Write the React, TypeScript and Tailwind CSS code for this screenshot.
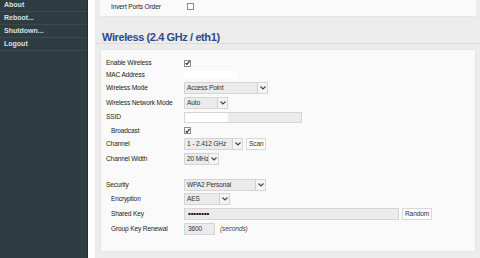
import React from 'react';

const MENU = ['About', 'Reboot...', 'Shutdown...', 'Logout'];

const Chevron = () => (
  <svg width="6" height="4" viewBox="0 0 6 4" className="block">
    <polyline points="0.5,0.5 3,3 5.5,0.5" fill="none" stroke="#444" strokeWidth="1.1" />
  </svg>
);

const Select = ({ value, width }: { value: string; width: string }) => (
  <div className={`flex h-[12px] ${width} items-stretch border border-[#d5d5d5] bg-[#ebebeb]`}>
    <span className="flex-1 overflow-hidden whitespace-nowrap pl-[2px] leading-[10px] text-[#333]">{value}</span>
    <span className="flex w-[10px] shrink-0 items-center justify-center border-l border-[#d0d0d0] bg-[#f4f4f4]">
      <Chevron />
    </span>
  </div>
);

const Check = ({ checked }: { checked?: boolean }) => (
  <span className="flex h-[7px] w-[7px] items-center justify-center border border-[#8a8a8a] bg-white">
    {checked && (
      <svg width="6" height="6" viewBox="0 0 6 6" className="block">
        <polyline points="0.8,3 2.4,4.8 5.4,0.8" fill="none" stroke="#111" strokeWidth="1.3" />
      </svg>
    )}
  </span>
);

const Row = ({
  label,
  indent,
  h,
  children,
}: {
  label?: string;
  indent?: boolean;
  h: string;
  children?: React.ReactNode;
}) => (
  <div className={`flex ${h} items-center`}>
    <div className={`w-[78px] shrink-0 whitespace-nowrap ${indent ? 'pl-[5px]' : ''} text-[#222]`}>{label}</div>
    <div className="flex items-center gap-[3px] whitespace-nowrap">{children}</div>
  </div>
);

const Button = ({ children }: { children: React.ReactNode }) => (
  <span className="flex h-[12px] items-center border border-[#d8d8d8] bg-white px-[2px] text-[#333]">
    {children}
  </span>
);

export default function App() {
  return (
    <div
      className="flex h-[258px] w-[480px] overflow-hidden text-[6.6px] tracking-[-0.15px]"
      style={{ fontFamily: '"Liberation Sans", Arial, sans-serif' }}
    >
      {/* sidebar */}
      <div className="w-[88px] shrink-0 border-r border-[#263135] bg-[#2f3c41]">
        <div className="-mt-[1px]">
          {MENU.map((item) => (
            <div
              key={item}
              className="flex h-[13px] items-center border-b border-[#3c4a50] pl-[4px] text-[7px] font-bold tracking-[0px] text-[#d3e3ea]"
            >
              {item}
            </div>
          ))}
        </div>
      </div>

      <div className="w-[7px] shrink-0 bg-white" />

      {/* main */}
      <div className="flex flex-1 flex-col bg-[#ececec]">
        <div className="ml-[5px] mr-[4px] h-[17px] border-b border-[#e4e4e4] bg-[#fafafa]">
          <div className="flex h-[13px] items-center pl-[11px]">
            <span className="w-[76px] text-[#222]">Invert Ports Order</span>
            <Check />
          </div>
        </div>

        <div className="mt-[15px] h-[12px] border-b border-[#dcdcdc] pl-[7px]">
          <h2 className="-mt-[1px] text-[11px] font-bold leading-[12px] tracking-[-0.4px] text-[#30498a]">
            Wireless (2.4 GHz / eth1)
          </h2>
        </div>

        <div className="ml-[5px] mr-[4px] mt-[5px] h-[203px] border border-[#e6e6e6] bg-[#fafafa] pl-[5px] pt-[7px]">
          <Row label="Enable Wireless" h="h-[12px]">
            <Check checked />
          </Row>
          <Row label="MAC Address" h="h-[11px]">
            <span className="h-[8px] w-[53px] bg-white" />
          </Row>
          <Row label="Wireless Mode" h="h-[15px]">
            <Select value="Access Point" width="w-[84px]" />
          </Row>
          <Row label="Wireless Network Mode" h="h-[15px]">
            <Select value="Auto" width="w-[44px]" />
          </Row>
          <Row label="SSID" h="h-[14px]">
            <span className="flex h-[11px] w-[118px] border border-[#d5d5d5] bg-[#ebebeb]">
              <span className="h-full w-[43px] bg-white" />
            </span>
          </Row>
          <Row label="Broadcast" indent h="h-[13px]">
            <Check checked />
          </Row>
          <Row label="Channel" h="h-[14px]">
            <Select value="1 - 2.412 GHz" width="w-[59px]" />
            <Button>Scan</Button>
          </Row>
          <Row label="Channel Width" h="h-[15px]">
            <Select value="20 MHz" width="w-[35px]" />
          </Row>
          <div className="h-[12px]" />
          <Row label="Security" h="h-[14px]">
            <Select value="WPA2 Personal" width="w-[82px]" />
          </Row>
          <Row label="Encryption" indent h="h-[14px]">
            <Select value="AES" width="w-[46px]" />
          </Row>
          <Row label="Shared Key" indent h="h-[15px]">
            <span className="flex h-[12px] w-[215px] items-center border border-[#d5d5d5] bg-[#ebebeb] pl-[3px] text-[8px] font-bold leading-none text-[#111]">
              ••••••••
            </span>
            <Button>Random</Button>
          </Row>
          <Row label="Group Key Renewal" indent h="h-[16px]">
            <span className="flex h-[12px] w-[31px] items-center border border-[#d5d5d5] bg-[#ebebeb] pl-[3px] text-[#333]">
              3600
            </span>
            <span className="ml-[2px] italic text-[#444]">(seconds)</span>
          </Row>
        </div>
      </div>
    </div>
  );
}
